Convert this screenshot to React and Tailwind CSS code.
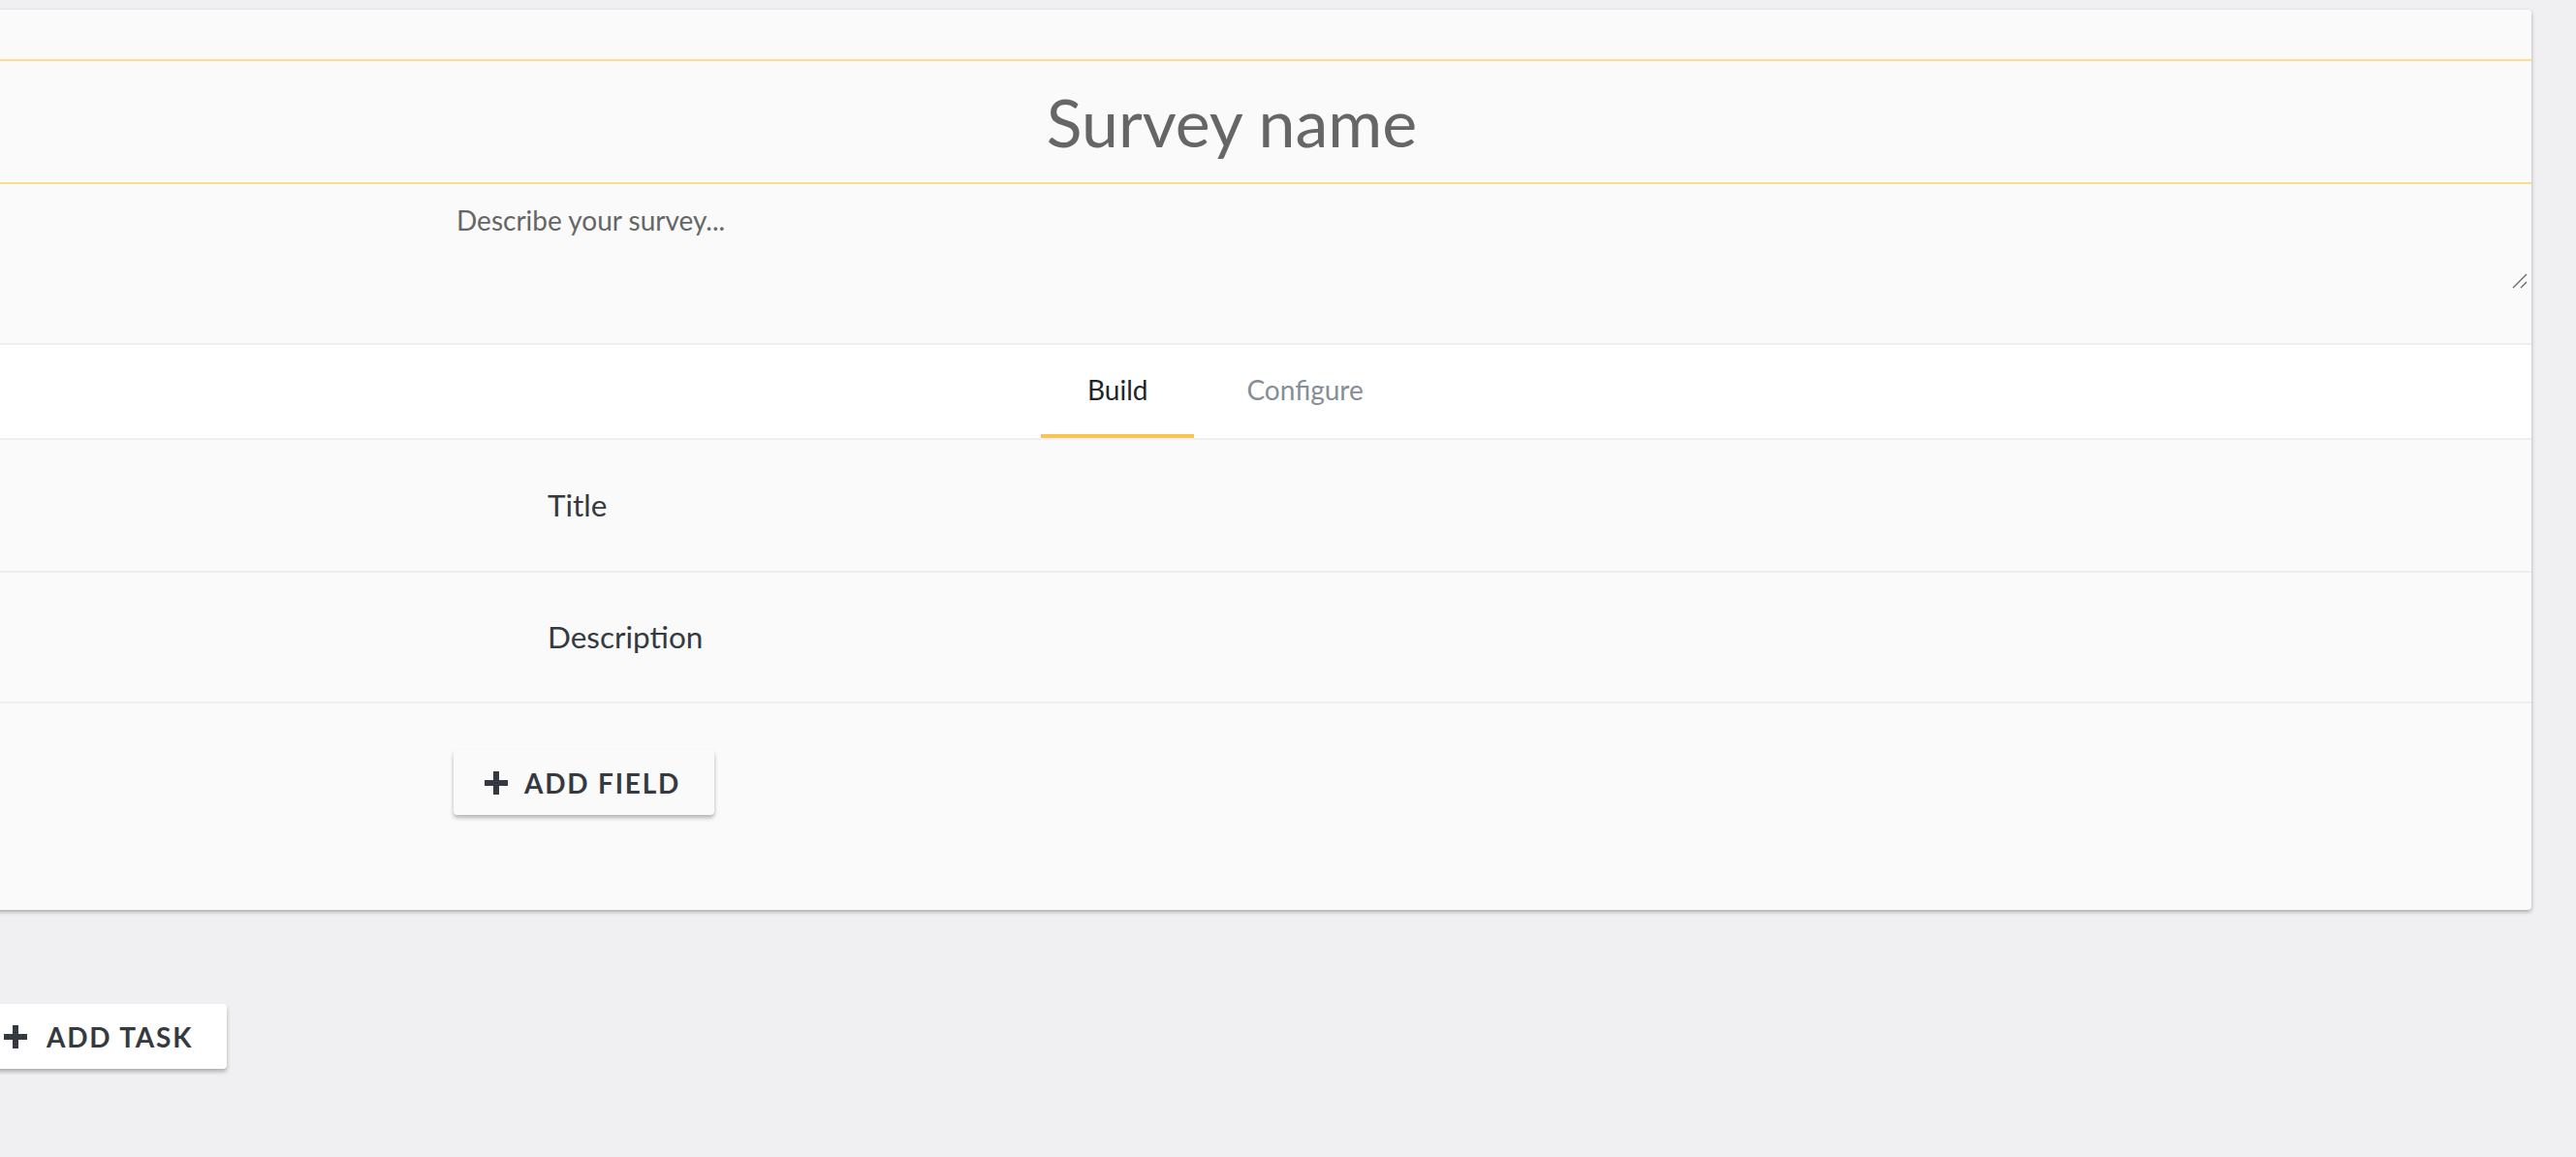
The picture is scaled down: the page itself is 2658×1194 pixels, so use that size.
import React from "react";

function Plus({ className }) {
  return (
    <svg viewBox="0 0 24 24" className={className} aria-hidden="true">
      <rect x="9" y="0" width="6" height="24" fill="currentColor" />
      <rect x="0" y="9" width="24" height="6" fill="currentColor" />
    </svg>
  );
}

export default function App() {
  return (
    <div className="w-full h-[1194px] overflow-hidden bg-[#f0f0f2] font-['Lato',sans-serif]">
      <div className="ml-[-70px] mt-[10px] w-[2682px] bg-[#fafafa] rounded-[4px] shadow-[0_2px_4px_rgba(0,0,0,0.3)]">
        <div className="h-[51px]" />
        <div className="h-[2px] bg-[#fcdc8e]" />
        <div className="h-[125px] flex items-center justify-center">
          <input
            placeholder="Survey name"
            className="w-full bg-transparent text-center text-[68px] text-[#666] placeholder:text-[#666] outline-none"
          />
        </div>
        <div className="h-[2px] bg-[#fcdc8e]" />
        <div className="h-[164px] pl-[525px] pr-[2px]">
          <div className="relative h-[110px]">
            <textarea
              placeholder="Describe your survey..."
              className="block w-full h-full p-4 bg-transparent text-[28px] leading-[1.5] text-[#666] placeholder:text-[#666] outline-none resize-none"
            />
            <svg
              viewBox="0 0 16 16"
              className="absolute right-[2px] bottom-[2px] w-[16px] h-[16px] text-[#666]"
              aria-hidden="true"
            >
              <line x1="1" y1="15" x2="15" y2="1" stroke="currentColor" strokeWidth="1.3" />
              <line x1="9" y1="15" x2="15" y2="9" stroke="currentColor" strokeWidth="1.3" />
            </svg>
          </div>
        </div>
        <div className="h-[2px] bg-[#eeeeee]" />
        <div className="h-[96px] bg-white flex pl-[1144px]">
          <div className="relative h-full px-[48px] pb-[5px] flex items-center text-[28px] text-[#212529]">
            Build
            <div className="absolute left-0 right-0 bottom-0 h-[4px] bg-[#f8c453]" />
          </div>
          <div className="h-full ml-[6px] px-[48px] pb-[5px] flex items-center text-[28px] text-[#868e96]">
            Configure
          </div>
        </div>
        <div className="h-[2px] bg-[#eeeeee]" />
        <div className="h-[135px] flex items-center pl-[635px] text-[31.5px] text-[#343a40]">
          Title
        </div>
        <div className="h-[2px] bg-[#eeeeee]" />
        <div className="h-[133px] flex items-center pl-[635px] text-[31.5px] text-[#343a40]">
          Description
        </div>
        <div className="h-[2px] bg-[#eeeeee]" />
        <div className="h-[213px] pt-[48px] pl-[538px]">
          <button className="h-[67px] pl-[32px] pr-[35px] flex items-center gap-[17px] bg-[#fafafa] rounded-[4px] shadow-[0_3px_4px_rgba(0,0,0,0.28)] text-[#343a40] text-[28px] font-bold tracking-[1.8px]">
            <Plus className="w-[24px] h-[24px]" />
            <span>ADD FIELD</span>
          </button>
        </div>
      </div>
      <div className="mt-[97px] ml-[-28px]">
        <button className="h-[67px] pl-[32px] pr-[35px] flex items-center gap-[20px] bg-white rounded-[4px] shadow-[0_3px_4px_rgba(0,0,0,0.28)] text-[#343a40] text-[28px] font-bold tracking-[1.8px]">
          <Plus className="w-[24px] h-[24px]" />
          <span>ADD TASK</span>
        </button>
      </div>
    </div>
  );
}
